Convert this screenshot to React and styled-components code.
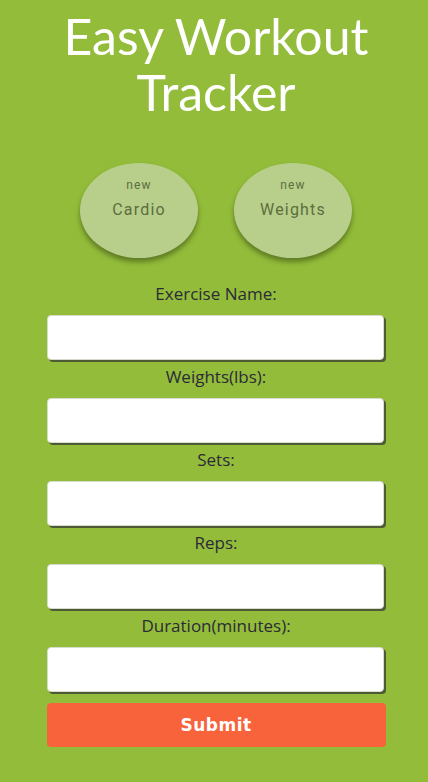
import React from 'react'
import styled, { createGlobalStyle } from 'styled-components'

const Global = createGlobalStyle`
  html, body {
    margin: 0;
    padding: 0;
    background-color: #93bc3a;
  }
`

const Page = styled.div`
  width: 428px;
  min-height: 782px;
  background-color: #93bc3a;
  display: flex;
  flex-direction: column;
  align-items: center;
  padding-left: 4px;
  box-sizing: border-box;
`

const Title = styled.h1`
  margin: 8px 0 0 0;
  font-family: Lato, 'Open Sans', sans-serif;
  font-weight: 400;
  font-size: 50px;
  line-height: 56px;
  color: #ffffff;
  text-align: center;
`

const ChoiceRow = styled.div`
  display: flex;
  gap: 36px;
  margin-top: 43px;
`

const Choice = styled.button`
  width: 118px;
  height: 95px;
  border: none;
  border-radius: 50%;
  background-color: #b8cf8b;
  box-shadow: 0 4px 5px rgba(60, 80, 20, 0.6);
  display: flex;
  flex-direction: column;
  align-items: center;
  justify-content: flex-start;
  padding-top: 15px;
  box-sizing: border-box;
  font-family: Roboto, 'Noto Sans', sans-serif;
  color: #5b6e3d;
  letter-spacing: 1.2px;
  cursor: pointer;
`

const Small = styled.span`
  font-size: 12px;
  line-height: 14px;
`

const Big = styled.span`
  font-size: 16px;
  line-height: 18px;
  margin-top: 9px;
`

const Form = styled.form`
  display: flex;
  flex-direction: column;
  align-items: center;
  margin-top: 25px;
  width: 339px;
`

const Label = styled.label`
  font-family: 'Open Sans', 'Noto Sans', sans-serif;
  font-size: 17px;
  line-height: 22px;
  color: #2b2b38;
  margin-bottom: 10px;
`

const Input = styled.input`
  width: 337px;
  height: 45px;
  box-sizing: border-box;
  border: 1px solid #d6dccc;
  border-radius: 4px;
  background: #ffffff;
  box-shadow: 2px 2px 0 #4d5a35;
  margin-bottom: 6px;
  margin-right: 2px;
`

const Submit = styled.button`
  width: 339px;
  height: 44px;
  margin-top: 5px;
  border: none;
  border-radius: 4px;
  background-color: #f8633b;
  color: #ffffff;
  font-family: 'DejaVu Sans', Verdana, sans-serif;
  font-weight: 700;
  font-size: 17px;
  letter-spacing: 0.5px;
`

const fields = [
  'Exercise Name:',
  'Weights(lbs):',
  'Sets:',
  'Reps:',
  'Duration(minutes):',
]

export default function App() {
  return (
    <Page>
      <Global />
      <Title>
        Easy Workout
        <br />
        Tracker
      </Title>
      <ChoiceRow>
        <Choice>
          <Small>new</Small>
          <Big>Cardio</Big>
        </Choice>
        <Choice>
          <Small>new</Small>
          <Big>Weights</Big>
        </Choice>
      </ChoiceRow>
      <Form onSubmit={e => e.preventDefault()}>
        {fields.map(f => (
          <React.Fragment key={f}>
            <Label>{f}</Label>
            <Input type="text" />
          </React.Fragment>
        ))}
        <Submit type="submit">Submit</Submit>
      </Form>
    </Page>
  )
}
